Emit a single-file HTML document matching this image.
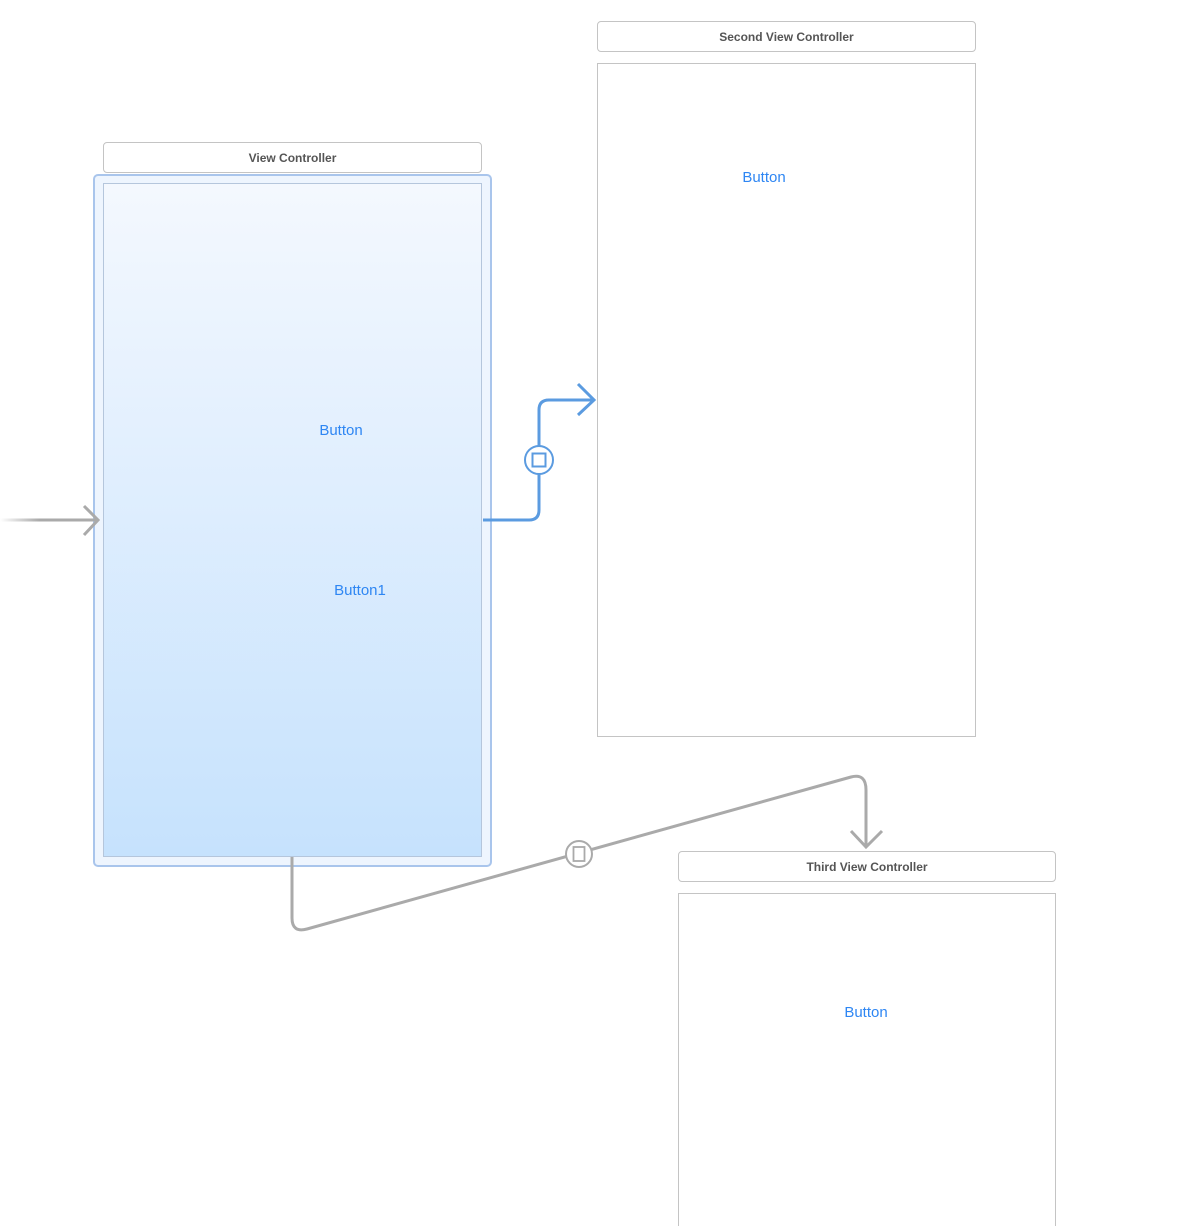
<!DOCTYPE html>
<html style="height:1226px;overflow:hidden"><head><meta charset="utf-8"><style>
html,body{height:1226px;overflow:hidden}
body{margin:0;width:1200px;background:#fff;position:relative;font-family:"Liberation Sans",sans-serif}
.t{position:absolute;box-sizing:border-box;border:1px solid #c4c4c4;border-radius:4px;background:#fff;font-size:12px;font-weight:bold;color:#555;text-align:center;line-height:31px}
.b{position:absolute;box-sizing:border-box;border:1px solid #c4c4c4;background:#fff}
.btn{position:absolute;font-size:15px;color:#2e86f3;transform:translateX(-50%);line-height:18px}
</style></head><body>
<div class="t" style="left:103px;top:142px;width:379px;height:31px">View Controller</div>
<div style="position:absolute;left:93px;top:174px;width:399px;height:693px;box-sizing:border-box;border:2px solid #a9c5ec;border-radius:5px;background:#eef5fe"></div>
<div style="position:absolute;left:103px;top:183px;width:379px;height:674px;box-sizing:border-box;border:1px solid #b5c6dc;background:linear-gradient(#f4f8fe,#c6e2fd)"></div>
<div class="btn" style="left:341px;top:422px">Button</div>
<div class="btn" style="left:360px;top:582px">Button1</div>

<div class="t" style="left:597px;top:21px;width:379px;height:31px">Second View Controller</div>
<div class="b" style="left:597px;top:63px;width:379px;height:674px"></div>
<div class="btn" style="left:764px;top:169px">Button</div>

<div class="t" style="left:678px;top:851px;width:378px;height:31px">Third View Controller</div>
<div class="b" style="left:678px;top:893px;width:378px;height:345px"></div>
<div class="btn" style="left:866px;top:1004px">Button</div>

<svg width="1200" height="1226" style="position:absolute;left:0;top:0" fill="none">
<defs><linearGradient id="g" gradientUnits="userSpaceOnUse" x1="0" y1="0" x2="98" y2="0"><stop offset="0" stop-color="#aaa" stop-opacity="0"/><stop offset="0.4" stop-color="#aaa"/></linearGradient></defs>
<rect x="0" y="518.5" width="98" height="3" fill="url(#g)"/>
<path d="M84 506 L98 520 L84 535" stroke="#aaa" stroke-width="3"/>
<path d="M483 520 H529 Q539 520 539 510 V410 Q539 400 549 400 H593" stroke="#5b9be0" stroke-width="3"/>
<path d="M578 384 L594 400 L578 415" stroke="#5b9be0" stroke-width="3"/>
<circle cx="539" cy="460" r="14" fill="#fff" stroke="#5b9be0" stroke-width="2"/>
<rect x="532.5" y="453.5" width="13" height="13" stroke="#5b9be0" stroke-width="2"/>
<path d="M292 857 V918 Q292 933 307 929 L851 777 Q866 773 866 790 V846" stroke="#aaa" stroke-width="3"/>
<path d="M851 831 L866 847 L882 831" stroke="#aaa" stroke-width="3"/>
<circle cx="579" cy="854" r="13" fill="#fff" stroke="#aaa" stroke-width="2"/>
<rect x="573.5" y="847" width="11" height="14" stroke="#aaa" stroke-width="1.8"/>
</svg>
</body></html>
